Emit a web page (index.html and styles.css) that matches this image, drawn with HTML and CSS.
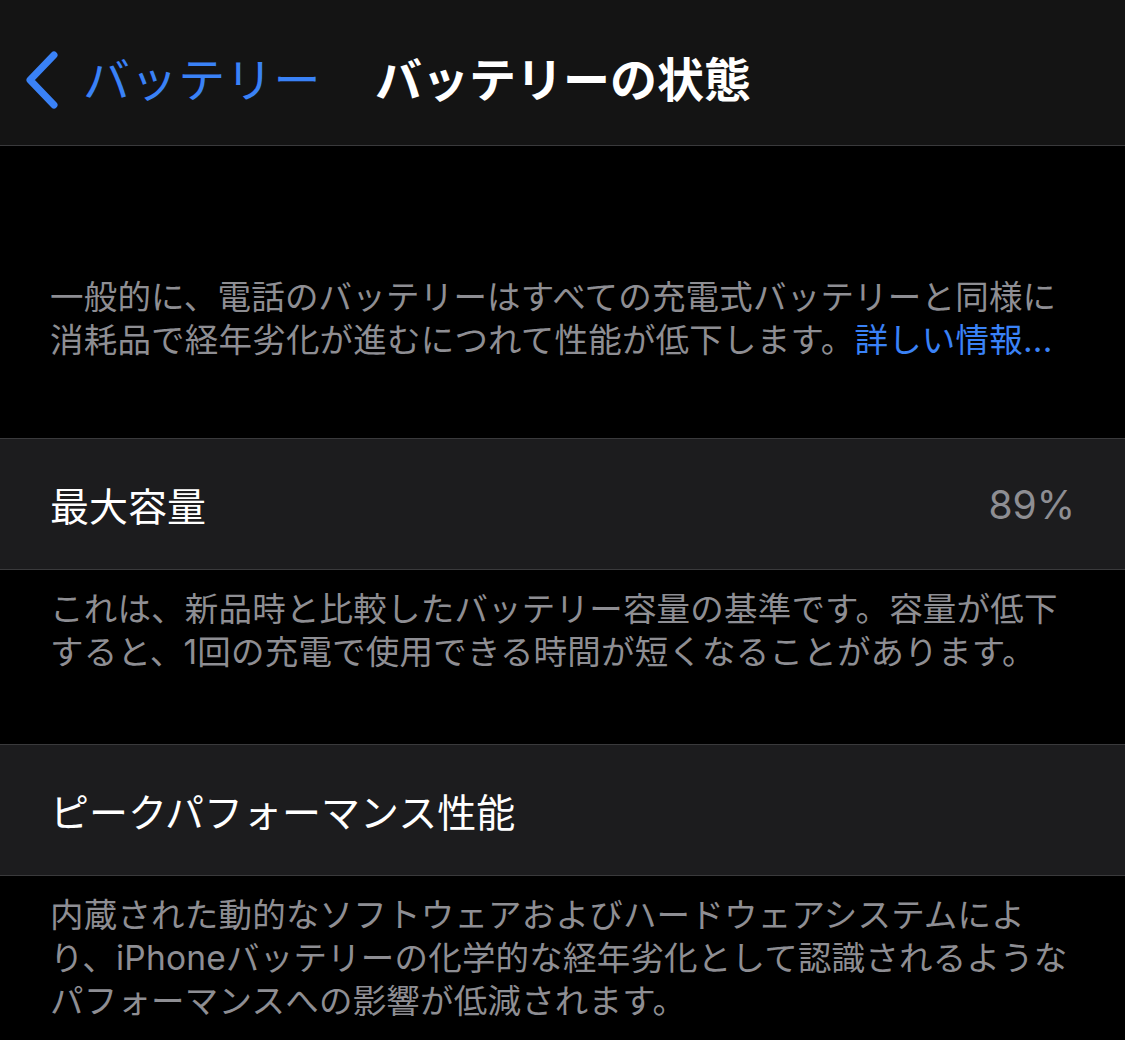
FILE: index.html
```html
<!DOCTYPE html>
<html lang="ja">
<head>
    <meta charset="UTF-8">
    <meta name="viewport" content="width=device-width, initial-scale=1.0">
    <title>バッテリーの状態</title>
    <link rel="stylesheet" href="styles.css">
</head>
<body>
    <!-- Navigation bar -->
    <div class="nav-bar">
        <a class="back" href="#">
            <svg class="chevron" width="40" height="62" viewBox="0 0 40 62">
                <polyline points="31,6 7,31 31,56" fill="none" stroke="#3a82f7" stroke-width="7" stroke-linecap="round" stroke-linejoin="round"/>
            </svg>
            <span class="back-label">バッテリー</span>
        </a>
        <h1 class="nav-title">バッテリーの状態</h1>
    </div>

    <div class="content">
        <p class="group-text intro">一般的に、電話のバッテリーはすべての充電式バッテリーと同様に消耗品で経年劣化が進むにつれて性能が低下します。<a class="link" href="#">詳しい情報...</a></p>

        <div class="cell">
            <span class="cell-title">最大容量</span>
            <span class="cell-value">89%</span>
        </div>
        <p class="group-text">これは、新品時と比較したバッテリー容量の基準です。容量が低下すると、1回の充電で使用できる時間が短くなることがあります。</p>

        <div class="cell">
            <span class="cell-title">ピークパフォーマンス性能</span>
        </div>
        <p class="group-text">内蔵された動的なソフトウェアおよびハードウェアシステムにより、iPhoneバッテリーの化学的な経年劣化として認識されるようなパフォーマンスへの影響が低減されます。</p>
    </div>
</body>
</html>
```

FILE: styles.css
```css
body {
    margin: 0;
    padding: 0;
    background-color: #000;
    font-family: "Inter", "Noto Sans CJK JP", sans-serif;
    color: #fff;
    overflow: hidden;
}

.nav-bar {
    display: flex;
    align-items: center;
    height: 146px;
    padding-top: 14px;
    box-sizing: border-box;
    background-color: #141414;
    border-bottom: 1px solid #3a3a3c;
}

.back {
    display: flex;
    align-items: center;
    text-decoration: none;
    color: #3a82f7;
    margin-left: 23px;
}

.chevron {
    display: block;
}

.back-label {
    font-size: 47px;
    margin-left: 20px;
    letter-spacing: 0.6px;
    line-height: 1;
}

.nav-title {
    margin: 0 0 0 54px;
    font-size: 47px;
    font-weight: 700;
    line-height: 1;
    color: #fff;
}

.group-text {
    margin: 0;
    padding: 18px 50px 70px 50px;
    font-size: 33.5px;
    letter-spacing: 0.2px;
    line-height: 43px;
    color: #8e8e93;
}

.intro {
    padding-top: 130px;
    padding-bottom: 76px;
}

.link {
    color: #3a82f7;
    text-decoration: none;
}

.cell {
    display: flex;
    align-items: center;
    justify-content: space-between;
    height: 130px;
    padding: 0 50px;
    background-color: #1c1c1e;
    border-top: 1px solid #3a3a3c;
    border-bottom: 1px solid #3a3a3c;
}

.cell-title {
    font-size: 39px;
    color: #fff;
}

.cell-value {
    font-size: 39px;
    color: #8e8e93;
}
```
